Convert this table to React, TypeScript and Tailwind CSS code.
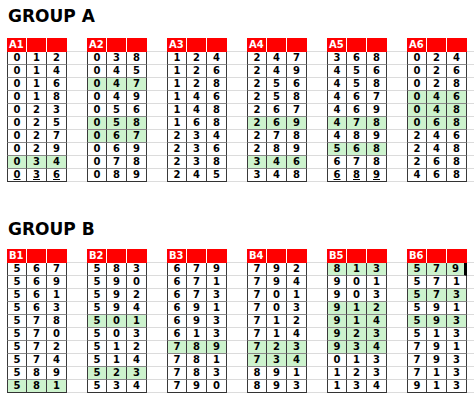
import React from "react";

type Block = { name: string; rows: string[]; green: number[]; underline?: boolean };

const groupA: Block[] = [
  { name: "A1", rows: ["012", "014", "016", "018", "023", "025", "027", "029", "034", "036"], green: [8], underline: true },
  { name: "A2", rows: ["038", "045", "047", "049", "056", "058", "067", "069", "078", "089"], green: [2, 5, 6] },
  { name: "A3", rows: ["124", "126", "128", "146", "148", "168", "234", "236", "238", "245"], green: [] },
  { name: "A4", rows: ["247", "249", "256", "258", "267", "269", "278", "289", "346", "348"], green: [5, 8] },
  { name: "A5", rows: ["368", "456", "458", "467", "469", "478", "489", "568", "678", "689"], green: [5, 7], underline: true },
  { name: "A6", rows: ["024", "026", "028", "046", "048", "068", "246", "248", "268", "468"], green: [3, 4, 5] },
];

const groupB: Block[] = [
  { name: "B1", rows: ["567", "569", "561", "563", "578", "570", "572", "574", "589", "581"], green: [9] },
  { name: "B2", rows: ["583", "590", "592", "594", "501", "503", "512", "514", "523", "534"], green: [4, 8] },
  { name: "B3", rows: ["679", "671", "673", "691", "693", "613", "789", "781", "783", "790"], green: [6] },
  { name: "B4", rows: ["792", "794", "701", "703", "712", "714", "723", "734", "891", "893"], green: [6, 7] },
  { name: "B5", rows: ["813", "901", "903", "912", "914", "923", "934", "013", "123", "134"], green: [0, 3, 4, 5, 6] },
  { name: "B6", rows: ["579", "571", "573", "591", "593", "513", "791", "793", "713", "913"], green: [0, 2, 4] },
];

function HeaderRow({ blocks }: { blocks: Block[] }) {
  return (
    <div className="flex h-[14px] pl-[7px]">
      {blocks.map((b, i) => (
        <React.Fragment key={b.name}>
          <div className="flex w-[60px] shrink-0">
            <div className="w-[20px] bg-[#ff0000] border-r border-white pl-[2px] text-[10px] leading-[14px] font-bold text-white">{b.name}</div>
            <div className="w-[20px] bg-[#ff0000] border-r border-white" />
            <div className="w-[20px] bg-[#ff0000]" />
          </div>
          {i < blocks.length - 1 && <div className="w-[20px] shrink-0 border-b border-[#dcdcdc]" />}
        </React.Fragment>
      ))}
      <div className="flex-1 border-b border-[#dcdcdc]" />
    </div>
  );
}

function DataRow({ blocks, r, group }: { blocks: Block[]; r: number; group: string }) {
  const last = r === 9;
  return (
    <div className="flex h-[13px] pl-[7px]">
      {blocks.map((b, i) => {
        const green = b.green.includes(r);
        const digits = b.rows[r].split("");
        const cursor = group === "B" && b.name === "B6" && r === 0;
        return (
          <React.Fragment key={b.name}>
            <div className={`flex w-[60px] shrink-0 ${green ? "bg-[#cdf3cd]" : "bg-white"}`}>
              {digits.map((d, j) => (
                <div
                  key={j}
                  className={`w-[20px] border-b ${last ? "border-b-[#333333]" : "border-b-[#8a8a8a]"} border-r border-r-[#3a3a3a] ${j === 0 ? "border-l border-l-[#3a3a3a]" : ""} ${cursor && j === 2 ? "border-r-[3px] border-r-black" : ""} text-center text-[10px] leading-[12px] font-bold text-black ${last && b.underline ? "underline" : ""}`}
                >
                  {d}
                </div>
              ))}
            </div>
            {i < blocks.length - 1 && <div className="w-[20px] shrink-0 border-b border-[#dcdcdc]" />}
          </React.Fragment>
        );
      })}
      <div className="flex-1 border-b border-[#dcdcdc]" />
    </div>
  );
}

function Group({ title, blocks, id }: { title: string; blocks: Block[]; id: string }) {
  return (
    <div>
      <div className="h-[20px] pl-[8px] text-[17px] leading-[20px] font-bold text-black">{title}</div>
      <div className={id === "A" ? "mt-[12px]" : "mt-[10px]"}>
        <HeaderRow blocks={blocks} />
        {Array.from({ length: 10 }).map((_, r) => (
          <DataRow key={r} blocks={blocks} r={r} group={id} />
        ))}
      </div>
    </div>
  );
}

export default function App() {
  return (
    <div
      className="w-[474px] h-[412px] bg-white overflow-hidden pt-[6px]"
      style={{ fontFamily: '"DejaVu Sans", Verdana, sans-serif' }}
    >
      <Group title="GROUP A" blocks={groupA} id="A" />
      <div className="h-[37px]" />
      <Group title="GROUP B" blocks={groupB} id="B" />
    </div>
  );
}
